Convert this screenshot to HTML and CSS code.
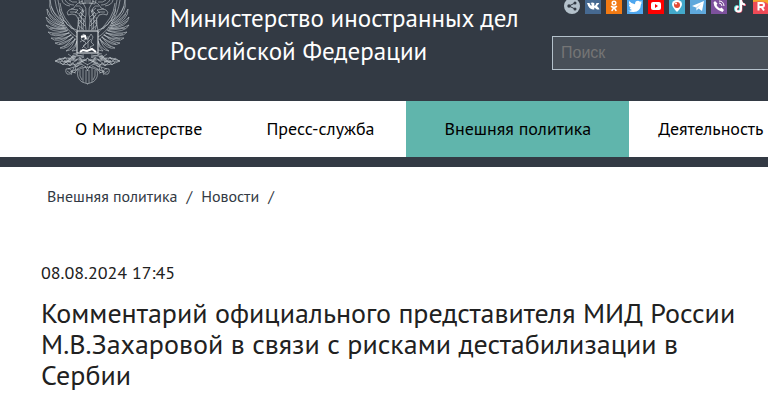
FILE: index.html
```
<!DOCTYPE html>
<html lang="ru">

<head>
    <meta charset="UTF-8">
    <meta name="viewport" content="width=device-width, initial-scale=1.0">
    <title>Министерство иностранных дел Российской Федерации</title>
    <link rel="stylesheet" href="styles.css">
</head>

<body>

    <header class="header">
        <a class="brand" href="#">
            <svg class="emblem" viewBox="45 0 86 85" aria-hidden="true">
                <defs>
                    <g id="eagle-half">
                        <!-- крыло -->
                        <path d="M58 0Q59 12 64 20T77 30M60 3Q61 12 65 18T77 33M55 0Q57 14 64 24T77 37" />
                        <path d="M64 21Q51 14 50 0Q47 13 63 24M64 24Q52 20 47 9Q46 20 64 27M65 26Q53 25 46 17Q47 27 66 29M66 28Q55 30 46 25Q50 33 67 31M68 30Q58 35 48 32Q53 39 69 33M69 32Q62 39 51 38Q57 44 71 35M71 34Q65 42 55 43Q62 48 73 37M73 36Q69 45 60 48Q68 50 75 39M75 38Q73 47 66 51Q74 50 77 41M77 41Q76 48 72 51L77 50" />
                        <path d="M51 6Q54 16 64 23M49 14Q54 22 65 26M48 21Q55 27 67 28M50 28Q59 30 68 30M52 34Q61 35 70 33M55 39Q64 39 72 35M59 44Q68 41 74 37M64 47Q71 43 76 39M60 9Q58 11 61 14Q59 16 63 18Q62 21 66 22Q66 25 70 26Q70 29 74 29" />
                        <!-- голова и шея -->
                        <path d="M83 1Q76 3 74 8L69 10Q66 12 68 15Q72 13 76 15Q80 19 78 25L77 31M83 3Q87 8 86 14Q84 20 86 30M76 6Q80 5 82 8T79 14M70 12L76 12Q80 14 82 19M83 9Q80 17 82 30M79 17Q77 22 80 30M65 0Q68 5 74 5M62 0Q63 5 70 6M79 0L80 4L86 3M69 0Q72 3 77 2M84 10L82 16M84 18L83 29M81 20L79 24M71 9L78 10L75 13M79 8L84 12M80 12L85 17M79 15L85 22M79 20L85 26M78 25L84 30" />
                        <!-- лапы и ветви -->
                        <path d="M78 54L72 56L76 57L68 59L74 60L64 61L71 62L55 61Q62 57 71 58T88 65M55 61Q62 65 70 65T88 58M59 60L65 58M63 63L71 61M69 65L77 60M77 63L85 59M76 55L84 57L79 59L87 61M74 66L83 61M68 54L75 59M56 61L60 58L62 61L65 57L68 61L72 57L75 61L80 57L82 62L87 59M60 62L63 65L66 62L70 66L73 63L77 67L80 63L86 67" />
                        <path d="M82 64Q74 67 68 69M83 66Q76 70 70 72M66 69Q65 72 67 74Q71 75 72 71Q69 67 66 69M67 71L70 73M72 72L76 73M74 67L71 75M76 66L75 71M78 69L74 73M73 54L77 53M71 57L84 55" />
                        <!-- хвост -->
                        <path d="M88 67Q82 67 78 70Q76 78 82 82L88 84M80 70Q79 77 82 80M83 68L83 82M86 70L86 83M85 66L88 71" />
                    </g>
                </defs>
                <use href="#eagle-half" />
                <use href="#eagle-half" transform="translate(175 0) scale(-1 1)" />
                <path d="M82 0V3H93V0M84 1H91" />
                <rect class="shield" x="77" y="31" width="21" height="22" />
                <path d="M81 36L84 34L86 37L84 40L88 39L91 34L93 37L91 42L94 45L90 47L92 50M80 42L83 40L86 43L83 46L87 49M84 34L81 39L84 42M88 36V48M91 39L85 45L82 48M86 51L80 50" />
                <path class="shield-light" d="M80 52L83 50L87 51L92 49L96 52M81 37L85 36L86 39" />
            </svg>
            <span class="brand-name">Министерство иностранных дел Российской Федерации</span>
        </a>

        <div class="tools">
            <div class="social">
                <a href="#" aria-label="Поделиться">
                    <svg viewBox="0 2 16 14">
                        <circle cx="8" cy="8" r="8" fill="#b4c1cb" />
                        <path d="M11 5L5 8L11 11" fill="none" stroke="#333a44" />
                        <circle cx="11" cy="5" r="1.5" fill="#333a44" />
                        <circle cx="5" cy="8" r="1.7" fill="#333a44" />
                        <circle cx="11" cy="11" r="1.5" fill="#333a44" />
                    </svg>
                </a>
                <a href="#" aria-label="ВКонтакте">
                    <svg viewBox="0 2 16 14">
                        <rect width="16" height="16" fill="#466991" />
                        <path d="M2 5H4.500Q5.500 8 6.500 8V6L5.500 5Q7 4 9.300 5V8Q10.500 8 11.500 5H14.300Q14 6 12 8Q14.500 10 14.500 11.500H12L9.300 9.500V11.500H8Q4 11.500 2 5" fill="#fff" />
                    </svg>
                </a>
                <a href="#" aria-label="Одноклассники">
                    <svg viewBox="0 2 16 14">
                        <rect width="16" height="16" fill="#f27a13" />
                        <g fill="none" stroke="#fff" stroke-width="1.5" stroke-linecap="round">
                            <circle cx="8" cy="5" r="1.8" />
                            <path d="M5.500 8.500Q8 10 10.500 8.500M8 9.500L6 12.500M8 9.500L10 12.500" />
                        </g>
                    </svg>
                </a>
                <a href="#" aria-label="Twitter">
                    <svg viewBox="0 2 16 14">
                        <rect width="16" height="16" fill="#4fa7ef" />
                        <path d="M1 12.500Q3.500 13 5 12Q3 11.500 2.500 9.800H4Q1.500 8.500 1.800 6.600L3 7Q1.200 5 2.200 3Q4.500 6 8 6.200Q8 2.800 11 2.800Q12 2.800 13 3.800L14.800 3L13.800 4.800L15.200 4.500L14 6Q13.500 14 6.500 14Q3 14 1 12.500" fill="#fff" />
                    </svg>
                </a>
                <a href="#" aria-label="YouTube">
                    <svg viewBox="0 2 16 14">
                        <rect width="16" height="16" fill="#f00" />
                        <rect x="3" y="4" width="10" height="8" rx="2" fill="#fff" />
                        <path d="M7 6L10 8L7 10Z" fill="#f00" />
                    </svg>
                </a>
                <a href="#" aria-label="Periscope">
                    <svg viewBox="0 2 16 14">
                        <rect width="16" height="16" fill="#43a9cb" />
                        <path d="M8 14Q3 9 3 6A5 4 0 0 1 13 6Q13 9 8 14" fill="#fff" />
                        <circle cx="8" cy="7" r="3" fill="#e34b35" />
                        <circle cx="7" cy="5.500" r="1" fill="#fff" />
                    </svg>
                </a>
                <a href="#" aria-label="Telegram">
                    <svg viewBox="0 2 16 14">
                        <rect width="16" height="16" fill="#5fa8dc" />
                        <path d="M2 8L14 3L12 13L8.500 10.500L6.500 12.500L6 9.500L2 8" fill="#fff" />
                        <path d="M6 9.500L11.500 5.500L7 10L6.500 12.500" fill="#b7d7ef" />
                    </svg>
                </a>
                <a href="#" aria-label="Viber">
                    <svg viewBox="0 2 16 14">
                        <rect width="16" height="16" fill="#7d519d" />
                        <path d="M4 3L6.500 5.500L5.500 7Q6.500 9.500 9 10.500L10.500 9.500L13 12L11.500 14Q3 11.500 2.500 4.500Z" fill="#fff" />
                        <path d="M8 3Q12.500 3 13 8M8 5Q10.500 5 11 8" fill="none" stroke="#fff" />
                    </svg>
                </a>
                <a href="#" aria-label="TikTok">
                    <svg viewBox="0 2 16 14">
                        <g fill="none" stroke-width="2">
                            <path d="M8 2V10.500A2.500 2.500 0 1 1 5.500 8M8 3Q9 6 12 6" stroke="#5ce4e2" />
                            <path d="M9.500 2V11.500A2.500 2.500 0 1 1 7 9M9.500 3Q10.500 7 14 7" stroke="#e65a74" />
                            <path d="M9 2V11A2.500 2.500 0 1 1 6.500 8.500M9 3Q10 6.500 13 6.500" stroke="#fff" />
                        </g>
                    </svg>
                </a>
                <a href="#" aria-label="Rutube">
                    <svg viewBox="0 2 16 14">
                        <rect width="16" height="16" fill="#ef4a56" />
                        <path d="M0 0H16V7Q12 2 0 4Z" fill="#f6a52b" />
                        <path d="M5.500 12.500V5H9Q11 5 11 7T9 9H5.500M8.500 9L11 12.500" fill="none" stroke="#fff" stroke-width="2" />
                    </svg>
                </a>
            </div>
            <form class="search">
                <input type="search" aria-label="Поиск" placeholder="Поиск">
            </form>
        </div>
    </header>

    <nav class="menu">
        <a href="#">О Министерстве</a>
        <a href="#">Пресс-служба</a>
        <a class="active" href="#">Внешняя политика</a>
        <a href="#">Деятельность</a>
    </nav>

    <main class="page">
        <div class="breadcrumbs">
            <a href="#">Внешняя политика</a>
            <span>/</span>
            <a href="#">Новости</a>
            <span>/</span>
        </div>

        <article class="article">
            <time datetime="2024-08-08T17:45">08.08.2024 17:45</time>
            <h1>Комментарий официального представителя МИД России М.В.Захаровой в связи с рисками дестабилизации в Сербии</h1>
        </article>
    </main>

</body>

</html>
```
FILE: styles.css
```
* {
    box-sizing: border-box;
}

body {
    margin: 0;
    font-family: "PT Sans", "Noto Sans", sans-serif;
    font-size: 16px;
    color: #212121;
    background-color: #fff;
    overflow-x: hidden;
}

a {
    color: inherit;
    text-decoration: none;
}

.header {
    display: flex;
    justify-content: space-between;
    height: 101px;
    padding-left: 45px;
    background-color: #333a44;
}

.brand {
    display: flex;
    gap: 39px;
    color: #fff;
}

.emblem {
    flex: none;
    width: 86px;
    height: 85px;
    fill: none;
    stroke: #c3c9cf;
    stroke-width: 0.6;
}

.emblem .shield {
    fill: #333a44;
    stroke: #e8ebee;
    stroke-width: 1;
}

.emblem .shield-light {
    stroke: #fff;
    stroke-width: 2;
}

.brand-name {
    width: 360px;
    padding-top: 2px;
    font-size: 25px;
    line-height: 33px;
}

.tools {
    flex: none;
    width: 216px;
}

.social {
    display: flex;
    gap: 5px;
    padding-left: 12px;
}

.social a {
    flex: none;
}

.social svg {
    display: block;
    width: 16px;
    height: 14px;
}

.search {
    margin-top: 22px;
    margin-right: -8px;
}

.search input {
    display: block;
    width: 100%;
    height: 34px;
    padding: 0 8px;
    font-family: "Liberation Sans", sans-serif;
    font-size: 16px;
    color: #fff;
    background-color: #484f58;
    border: 1px solid #b4c1cb;
    border-radius: 0;
    appearance: none;
}

.search input::placeholder {
    color: #757575;
}

.menu {
    display: flex;
    padding-left: 43px;
    border-bottom: 10px solid #333a44;
}

.menu a {
    flex: none;
    padding: 0 32px;
    font-size: 18px;
    line-height: 56px;
    color: #000;
}

.menu a:last-child {
    padding-left: 29px;
}

.menu .active {
    padding: 0 38px;
    background-color: #60b5ac;
}

.page {
    padding: 16px 30px 0 41px;
}

.breadcrumbs {
    display: flex;
    gap: 9px;
    padding-left: 6px;
    font-size: 16px;
    line-height: 26px;
    color: #333a44;
}

.article {
    padding-top: 50px;
}

.article time {
    display: block;
    font-size: 18px;
    line-height: 28px;
}

.article h1 {
    margin: 10px 0 0;
    font-size: 28px;
    font-weight: 400;
    line-height: 31px;
}
```
